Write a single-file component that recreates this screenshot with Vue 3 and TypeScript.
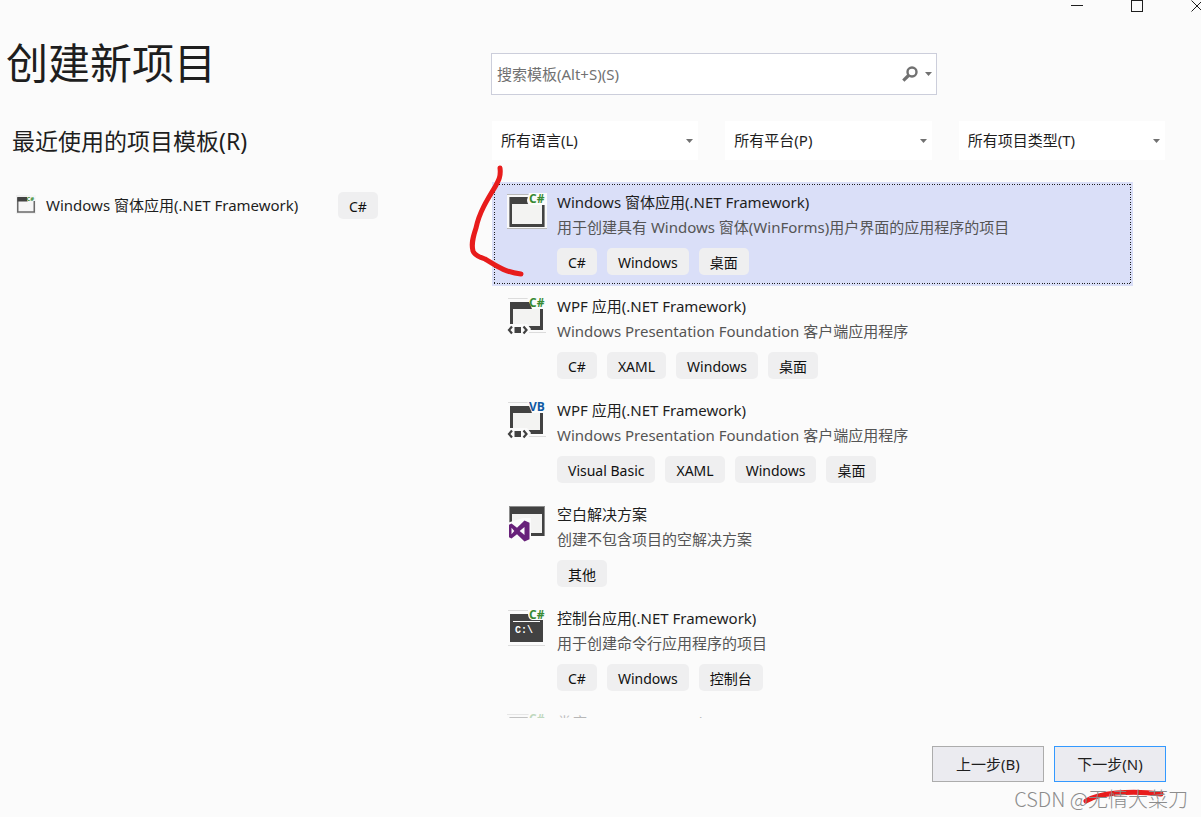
<script setup lang="ts">
import { ref } from 'vue'

type IconKind = 'form' | 'wpf' | 'solution' | 'console'

interface Template {
  icon: IconKind
  lang?: 'C#' | 'VB'
  name: string
  description: string
  tags: string[]
}

const query = ref('')
const selected = ref(0)

const filters = [
  { id: 'language', label: '所有语言(L)' },
  { id: 'platform', label: '所有平台(P)' },
  { id: 'type', label: '所有项目类型(T)' },
]

const templates: Template[] = [
  {
    icon: 'form',
    lang: 'C#',
    name: 'Windows 窗体应用(.NET Framework)',
    description: '用于创建具有 Windows 窗体(WinForms)用户界面的应用程序的项目',
    tags: ['C#', 'Windows', '桌面'],
  },
  {
    icon: 'wpf',
    lang: 'C#',
    name: 'WPF 应用(.NET Framework)',
    description: 'Windows Presentation Foundation 客户端应用程序',
    tags: ['C#', 'XAML', 'Windows', '桌面'],
  },
  {
    icon: 'wpf',
    lang: 'VB',
    name: 'WPF 应用(.NET Framework)',
    description: 'Windows Presentation Foundation 客户端应用程序',
    tags: ['Visual Basic', 'XAML', 'Windows', '桌面'],
  },
  {
    icon: 'solution',
    name: '空白解决方案',
    description: '创建不包含项目的空解决方案',
    tags: ['其他'],
  },
  {
    icon: 'console',
    lang: 'C#',
    name: '控制台应用(.NET Framework)',
    description: '用于创建命令行应用程序的项目',
    tags: ['C#', 'Windows', '控制台'],
  },
  {
    icon: 'form',
    lang: 'C#',
    name: '类库(.NET Framework)',
    description: '',
    tags: [],
  },
]
</script>

<template>
  <div class="window">
    <div class="captions">
      <button type="button" aria-label="最小化">
        <svg width="14" height="14" viewBox="0 0 14 14"><path d="M1 6.5H13" /></svg>
      </button>
      <button type="button" aria-label="最大化">
        <svg width="14" height="14" viewBox="0 0 14 14"><rect x="1.5" y="1.5" width="11" height="11" /></svg>
      </button>
      <button type="button" aria-label="关闭">
        <svg width="14" height="14" viewBox="0 0 14 14"><path d="M1.5 1.5L12.5 12.5M12.5 1.5L1.5 12.5" /></svg>
      </button>
    </div>

    <main class="columns">
      <section class="recent">
        <h1>创建新项目</h1>
        <h2>最近使用的项目模板(R)</h2>
        <div class="recent-item">
          <svg class="recent-icon" width="20" height="20" viewBox="0 0 40 40">
            <rect x="0" y="0" width="40" height="38" fill="#f0f0f0" />
            <rect x="3.5" y="6" width="33" height="28" fill="#f6f6f6" stroke="#6a6a6a" stroke-width="3" />
            <rect x="3" y="4" width="20" height="9" fill="#424242" />
            <rect x="22" y="0" width="18" height="12" fill="#f6f6f6" />
            <text x="21" y="11" class="badge csharp">C#</text>
          </svg>
          <span class="recent-name">Windows 窗体应用(.NET Framework)</span>
          <span class="tag">C#</span>
        </div>
      </section>

      <section class="browse">
        <div class="search">
          <input v-model="query" type="text" placeholder="搜索模板(Alt+S)(S)" aria-label="搜索模板" />
          <button type="button" class="search-button" aria-label="搜索">
            <svg width="16" height="16" viewBox="0 0 16 16">
              <circle cx="10" cy="6" r="4.5" fill="none" stroke="#717171" stroke-width="2.4" />
              <path d="M6.5 9.5L1.3 14.7" stroke="#717171" stroke-width="3.2" />
            </svg>
          </button>
          <button type="button" class="history-button" aria-label="搜索历史">
            <svg width="7" height="4" viewBox="0 0 7 4"><path d="M0 0H7L3.5 4Z" fill="#717171" /></svg>
          </button>
        </div>

        <div class="filters">
          <div v-for="f in filters" :key="f.id" class="filter">
            <select :id="f.id" :aria-label="f.label">
              <option>{{ f.label }}</option>
            </select>
            <svg width="7" height="4" viewBox="0 0 7 4"><path d="M0 0H7L3.5 4Z" fill="#717171" /></svg>
          </div>
        </div>

        <ul class="templates">
          <li
            v-for="(t, i) in templates"
            :key="i"
            class="template"
            :class="{ selected: i === selected, fading: i === templates.length - 1 }"
            @click="selected = i"
          >
            <svg class="icon" width="40" height="40" viewBox="0 0 40 40">
              <template v-if="t.icon === 'form'">
                <rect x="0" y="1" width="40" height="35" fill="#f8f8f8" />
                <path d="M0 1.5H28M0 35.5H40" stroke="#b9b9b9" />
                <rect x="2" y="4" width="36" height="30" fill="#8c8c8c" />
                <rect x="3" y="4" width="34" height="30" fill="#424242" />
                <rect x="5" y="11" width="30" height="20" fill="#f3f3f2" />
                <path d="M22 0H40V12H24Q20 12 20 7Z" fill="#fbfbfb" />
              </template>

              <template v-else-if="t.icon === 'wpf'">
                <path d="M1 1.5H28M18 35.5H39" stroke="#dcdcdc" />
                <rect x="3" y="5" width="33" height="28" fill="#424242" />
                <rect x="6" y="12" width="27" height="17" fill="#f3f3f2" />
                <path d="M20 0H40V12H25Z" fill="#fbfbfb" />
                <path d="M0 27H20L24 32L20 39H0Z" fill="#fbfbfb" />
                <path d="M5 29.5L2 33L5 36.5M16.500 29.5L19.500 33L16.500 36.5" fill="none" stroke="#424242" stroke-width="2.2" />
                <rect x="7.5" y="30" width="6.5" height="6" fill="#424242" />
              </template>

              <template v-else-if="t.icon === 'solution'">
                <rect x="2" y="1" width="36" height="30" fill="#8c8c8c" />
                <rect x="3" y="2" width="34" height="29" fill="#424242" />
                <rect x="5" y="9" width="30" height="19" fill="#f3f3f2" />
                <path d="M0 18L6 16L16 13H24V40H0Z" fill="#fbfbfb" />
                <path
                  fill="#68217a"
                  fill-rule="evenodd"
                  d="M17.5 15.5L22.5 17.7V34.3L17.5 36.5L10 29.3L4.5 33.5L2 32.3V19.8L4.5 18.5L10 22.7ZM4.5 22.8V29.2L7.3 26ZM12.7 26L17.5 30V22Z"
                />
              </template>

              <template v-else>
                <path d="M1 1.5H28M1 36.5H38" stroke="#dcdcdc" />
                <rect x="3" y="5" width="33" height="28" fill="#424242" />
                <path d="M6 12.5H33" stroke="#fbfbfb" />
                <path d="M21 0H40V11H25Q21 10 21 5Z" fill="#fbfbfb" />
                <text x="8" y="24" class="prompt">C:\</text>
              </template>

              <text v-if="t.lang === 'C#'" x="22" y="10" class="badge csharp">C#</text>
              <text v-else-if="t.lang === 'VB'" x="22" y="10" class="badge vb">VB</text>
            </svg>
            <div class="body">
              <div class="name">{{ t.name }}</div>
              <div class="description">{{ t.description }}</div>
              <div class="tags">
                <span v-for="tag in t.tags" :key="tag" class="tag">{{ tag }}</span>
              </div>
            </div>
          </li>
        </ul>
      </section>
    </main>

    <footer class="actions">
      <button type="button">上一步(B)</button>
      <button type="button" class="primary">下一步(N)</button>
    </footer>

    <svg class="ink ink-bracket" width="60" height="120" viewBox="0 0 60 120">
      <path d="M33 8C34 16 32 20 28 27C20 40 12 53 9 68C6 77 4 84 6 91C7 94 12 97 18 99C27 104 36 112 54 114" />
    </svg>
    <svg class="ink ink-underline" width="90" height="20" viewBox="0 0 90 20">
      <path d="M6 14C18 6 50 3 81 7" />
    </svg>
    <div class="watermark">CSDN @无情大菜刀</div>
  </div>
</template>

<style>
body {
  margin: 0;
  background: #fbfbfb;
}
</style>

<style scoped>
.window {
  position: relative;
  box-sizing: border-box;
  display: flex;
  flex-direction: column;
  height: 100vh;
  overflow: hidden;
  background: #fbfbfb;
  color: #1e1e1e;
  font-family: "Noto Sans", "Noto Sans CJK SC", sans-serif;
  font-size: 15px;
  line-height: 25px;
}

button,
input,
select {
  margin: 0;
  padding: 0;
  border: 0;
  background: none;
  color: inherit;
  font: inherit;
}

.captions {
  display: flex;
  justify-content: flex-end;
  height: 13px;
  margin-right: -26px;
}

.captions button {
  display: flex;
  justify-content: center;
  align-items: flex-start;
  width: 60px;
}

.captions svg {
  margin-top: -1px;
  fill: none;
  stroke: #1e1e1e;
}

.columns {
  flex: 1;
  min-height: 0;
  display: grid;
  grid-template-columns: 491px 1fr;
  grid-template-rows: 100%;
}

.recent h1 {
  margin: 20px 0 0 6px;
  font-size: 42px;
  line-height: 60px;
  font-weight: 400;
}

.recent h2 {
  margin: 30px 0 0 12px;
  font-size: 23px;
  line-height: 36px;
  font-weight: 400;
}

.recent-item {
  display: flex;
  align-items: center;
  height: 28px;
  margin: 32px 0 0 16px;
}

.recent-icon {
  margin-right: 10px;
}

.recent-name {
  width: 292px;
}

.browse {
  display: flex;
  flex-direction: column;
  padding: 40px 36px 0 0;
}

.search {
  box-sizing: border-box;
  display: flex;
  align-items: center;
  width: 446px;
  height: 42px;
  border: 1px solid #cccedb;
  background: #fff;
}

.search input {
  flex: 1;
  height: 100%;
  padding-left: 5px;
  outline: none;
}

.search input::placeholder {
  color: #717171;
  opacity: 1;
}

.search-button,
.history-button {
  display: flex;
  align-items: center;
  height: 100%;
}

.history-button {
  margin: 0 4px 0 7px;
}

.filters {
  display: grid;
  grid-template-columns: repeat(3, 1fr);
  gap: 27px;
  margin: 26px 0 22px 1px;
}

.filter {
  display: grid;
  align-items: center;
  height: 39px;
  background: #fff;
}

.filter select,
.filter svg {
  grid-area: 1 / 1;
}

.filter select {
  height: 100%;
  padding-left: 9px;
  appearance: none;
}

.filter svg {
  justify-self: end;
  margin-right: 5px;
  pointer-events: none;
}

.templates {
  flex: 1;
  min-height: 0;
  overflow: hidden;
  margin: 0 32px 0 1px;
  padding: 0;
  list-style: none;
}

.template {
  position: relative;
  box-sizing: border-box;
  display: flex;
  gap: 10px;
  height: 104px;
  padding: 8px 15px 11px;
}

.selected {
  background: #dadff8;
}

/* Focus rectangle: unevenly spaced single-pixel dots on all four sides */
.selected::after {
  --dots: #1e1e1e 0 1px, transparent 1px 3px, #1e1e1e 3px 4px, transparent 4px 5px;
  content: "";
  position: absolute;
  inset: 2px;
  background:
    repeating-linear-gradient(90deg, var(--dots)) top / 100% 1px no-repeat,
    repeating-linear-gradient(90deg, var(--dots)) bottom / 100% 1px no-repeat,
    repeating-linear-gradient(180deg, var(--dots)) left / 1px 100% no-repeat,
    repeating-linear-gradient(180deg, var(--dots)) right / 1px 100% no-repeat;
  pointer-events: none;
}

.fading {
  opacity: 0.3;
}

.icon {
  flex: none;
  margin-top: 3px;
  overflow: visible;
}

.name,
.description {
  white-space: nowrap;
}

.description {
  color: #555;
}

.tags {
  display: flex;
  gap: 10px;
  margin-top: 8px;
}

.tag {
  height: 27px;
  padding: 0 11px;
  border-radius: 5px;
  background: #efeff0;
  color: #111;
  font-size: 14px;
  line-height: 29px;
}

.badge {
  font-family: "Open Sans", sans-serif;
  font-size: 12px;
  font-weight: 700;
}

.csharp {
  fill: #388a34;
}

.vb {
  fill: #0f59a4;
}

.prompt {
  fill: #fff;
  font-family: "Liberation Mono", monospace;
  font-size: 10px;
  font-weight: 700;
}

.actions {
  display: flex;
  justify-content: flex-end;
  gap: 10px;
  padding: 28px 35px 35px;
}

.actions button {
  box-sizing: border-box;
  width: 112px;
  height: 36px;
  border: 1px solid #acacac;
  background: #ebebf0;
}

.actions .primary {
  border-color: #3399ff;
}

.ink {
  position: absolute;
  fill: none;
  stroke: #e81c1c;
  stroke-width: 5;
  stroke-linecap: round;
  stroke-linejoin: round;
  pointer-events: none;
}

.ink-bracket {
  left: 467px;
  top: 160px;
}

.ink-underline {
  right: 31px;
  bottom: 10px;
}

.watermark {
  position: absolute;
  right: 13px;
  bottom: 4px;
  color: #8c8c8c;
  font-family: "Noto Sans CJK SC", sans-serif;
  font-size: 20px;
  line-height: 28px;
  font-weight: 300;
  pointer-events: none;
}
</style>
